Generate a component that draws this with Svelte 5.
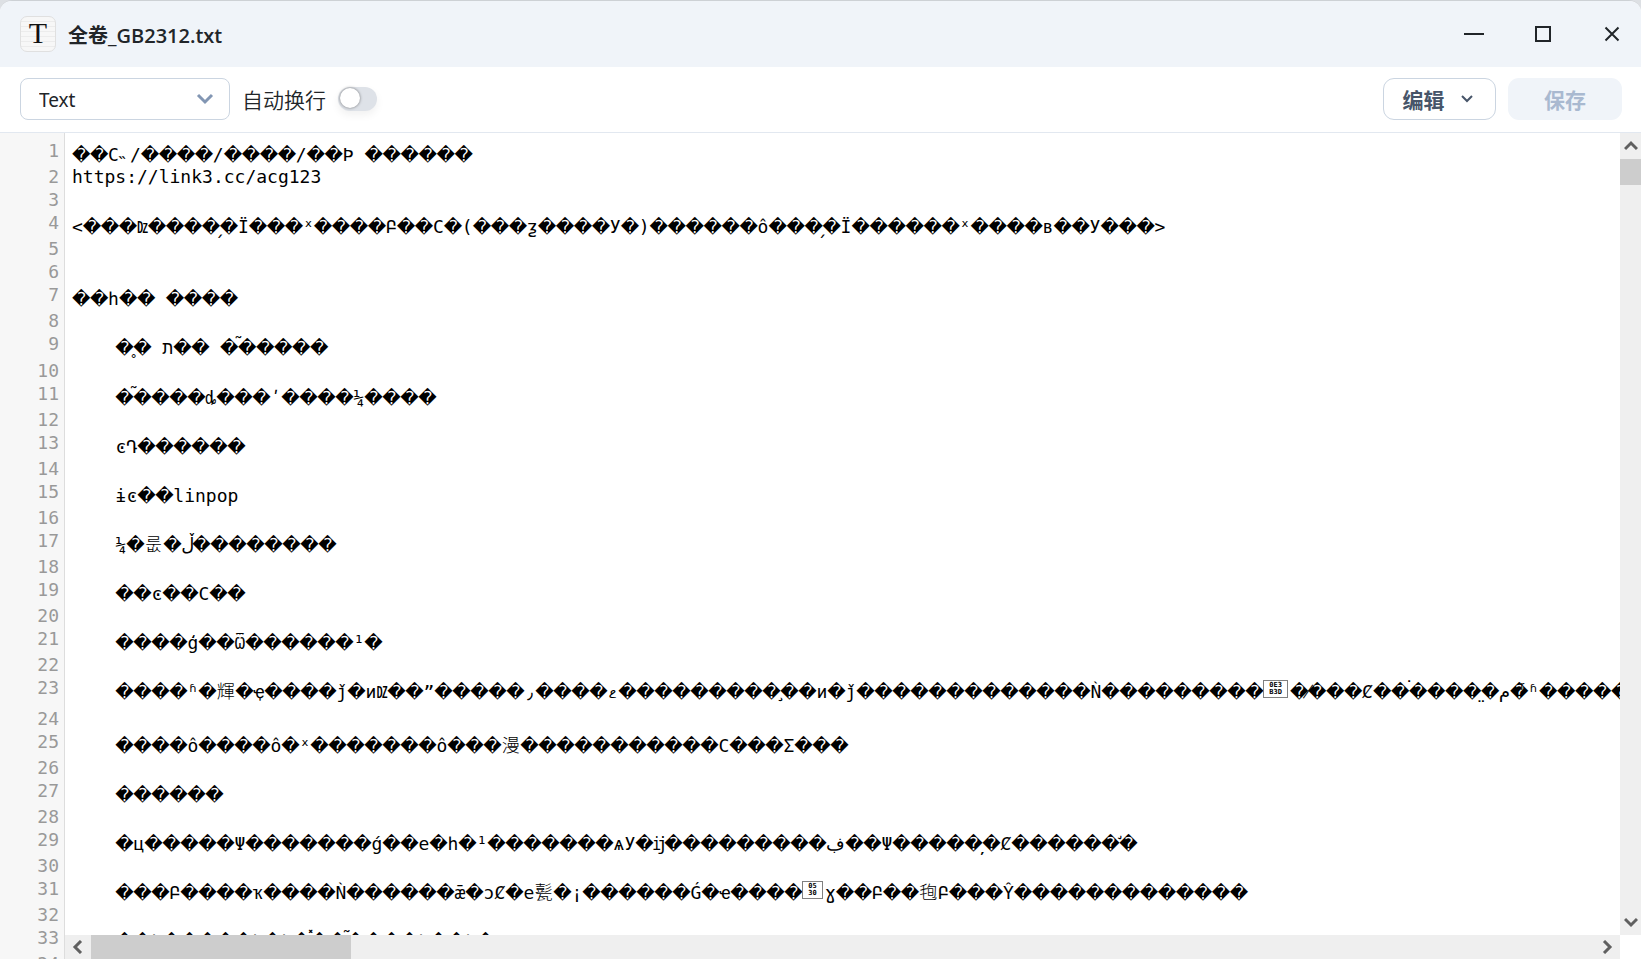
<script>
	let modes = ["Text", "Markdown", "JSON", "HTML"];
	let mode = "Text";
	let wrap = false;

	// "~3" is a run of three undecodable characters, "[0E3B3D]" a code box
	let source = [
		"~2С˵/~4/~4/~2Ϸ ~6",
		"https://link3.cc/acg123",
		"",
		"<~3ǲ~4̗~1Ϊ~3ˣ~4Բ~2С~1(~3ƺ~4У~1)~6ô~3̗~1Ϊ~6ˣ~4в~2У~3>",
		"",
		"",
		"~2һ~2 ~4",
		"",
		"    ~1̥~1 ת~2 ~1̃~5",
		"",
		"    ~1̃~4ȡ~3ʹ~4¼~4",
		"",
		"    ͼԴ~6",
		"",
		"    ɨͼ~2linpop",
		"",
		"    ¼~1룺~1ڵ~8",
		"",
		"    ~2ͼ~2С~2",
		"",
		"    ~4ģ~2Ѿ~6¹~1",
		"",
		"    ~4ʱ~1輝~1ҿ~4ǰ~1ͷǱ~2ˮ~5٫~4ޱ~9̧~2ͷ~1ǰ~13Ǹ~9[0E3B3D]~1̸~3Ȼ~2̇~4̤~1م~1ͬʱ~6",
		"",
		"    ~4ô~4ô~1ˣ~7ô~3漫~11С~3Σ~3",
		"",
		"    ~6",
		"",
		"    ~1ц~5Ψ~7ǵ~2е~1һ~1¹~7ѧУ~1ĳ~9ڣ~2Ψ~5̦~1Ȼ~6̛~1",
		"",
		"    ~3Բ~4ҡ~4Ǹ~6ǣ~1ͻȻ~1е甏~1¡~6Ǵ~1ҽ~4[0530]ɣ~2Բ~2毥Բ~3Ŷ~13",
		"",
		"    ~2һ~5һ~1һ~1̽~2̃~4һ~2һ~1",
		""
	];

	let marksAbove = "\u0303\u0307\u031b\u033d\u036c";

	let parse = function (text) {
		let parts = [];
		(text.match(/~\d+|\[\w+\]|[ -Z^-}]+|./gu) || []).forEach(item => {
			if (item[0] === "~") {
				for (let i = 0; i < +item.slice(1); i++) {
					parts.push({ type: "bad", text: "\ufffd" });
				}
			} else if (item[0] === "[") {
				let half = (item.length - 2) / 2;
				parts.push({ type: "box", text: item.slice(1, 1 + half), rest: item.slice(1 + half, -1) });
			} else if (/[\u0300-\u036f]/.test(item)) {
				parts.push({ type: marksAbove.includes(item) ? "mark above" : "mark", text: "\u00a0" + item });
			} else if (/[\u06a3\u3000-\ud7ff]/.test(item)) {
				parts.push({ type: "wide", text: item });
			} else if (item > "\u007f") {
				parts.push({ type: "cell", text: item });
			} else {
				parts.push({ type: "text", text: item });
			}
		});
		return parts;
	}

	let lines = source.map(text => ({
		parts: parse(text),
		tall: text.includes("~"),
		hebrew: text.includes("\u05ea"),
		extra: text.includes("[0E3B3D]")
	}));
</script>

<main>
	<header>
		<span class="logo">T</span>
		<h1>全卷_GB2312.txt</h1>
		<button class="win" aria-label="最小化">
			<svg width="20" height="20" viewBox="0 0 20 20"><path d="M0 10H20" /></svg>
		</button>
		<button class="win" aria-label="最大化">
			<svg width="20" height="20" viewBox="0 0 20 20"><path d="M3 3H17V17H3Z" /></svg>
		</button>
		<button class="win" aria-label="关闭">
			<svg width="20" height="20" viewBox="0 0 20 20"><path d="M3.5 3.5L16.5 16.5M16.5 3.5L3.5 16.5" /></svg>
		</button>
	</header>

	<div class="toolbar">
		<div class="select">
			<select bind:value={mode} aria-label="语言">
				{#each modes as item}
					<option>{item}</option>
				{/each}
			</select>
			<svg width="18" height="12" viewBox="0 0 18 12"><path d="M2 2L9 9L16 2" /></svg>
		</div>
		<label for="wrap">自动换行</label>
		<input id="wrap" type="checkbox" role="switch" bind:checked={wrap} />
		<button class="edit">
			编辑
			<svg width="12" height="8" viewBox="0 0 12 8"><path d="M1 1L6 6L11 1" /></svg>
		</button>
		<button class="save" disabled>保存</button>
	</div>

	<div class="editor">
		<div class="lines">
			{#each lines as line, i}
				<div class="line" class:tall={line.tall} class:hebrew={line.hebrew} class:extra={line.extra}>
					<span class="number">{i + 1}</span>
					<pre class:wrap>{#each line.parts as part}{#if part.type === "box"}<span class="box"><span>{part.text}</span><span>{part.rest}</span></span>{:else}<span class={part.type}>{part.text}</span>{/if}{/each}</pre>
				</div>
			{/each}
		</div>
		<div class="vbar">
			<button aria-label="向上滚动"><svg width="14" height="12" viewBox="0 0 14 12"><path d="M1 9L7 3L13 9" /></svg></button>
			<div class="thumb"></div>
			<button class="end" aria-label="向下滚动"><svg width="14" height="12" viewBox="0 0 14 12"><path d="M1 3L7 9L13 3" /></svg></button>
		</div>
		<div class="corner"></div>
		<div class="hbar">
			<button aria-label="向左滚动"><svg width="12" height="14" viewBox="0 0 12 14"><path d="M9 1L3 7L9 13" /></svg></button>
			<div class="thumb"></div>
			<button class="end" aria-label="向右滚动"><svg width="12" height="14" viewBox="0 0 12 14"><path d="M3 1L9 7L3 13" /></svg></button>
		</div>
	</div>
</main>

<style>
	:global(body) {
		background: #dde0e4;
	}

	main {
		display: flex;
		flex-direction: column;
		height: 100vh;
		box-sizing: border-box;
		border-top: 1px solid #cdd1d5;
		border-radius: 12px 12px 0 0;
		overflow: hidden;
		background: #fff;
		color: #212529;
		font-family: "Noto Sans", "Noto Sans CJK SC", sans-serif;
		font-size: 20px;
	}

	button {
		display: flex;
		align-items: center;
		justify-content: center;
		padding: 0;
		border: 0;
		background: none;
		color: inherit;
		font: inherit;
	}

	svg {
		display: block;
		fill: none;
		stroke: currentColor;
		stroke-width: 2;
	}

	header {
		display: flex;
		align-items: center;
		flex: none;
		height: 66px;
		padding: 0 12px 0 20px;
		box-sizing: border-box;
		background: #f0f4f9;
	}

	.logo {
		width: 34px;
		height: 34px;
		border: 1px solid #e0e0e0;
		border-radius: 7px;
		background: repeating-linear-gradient(#f7f7f7 0 4px, #ececec 4px 5px);
		color: #111;
		font: 30px/32px "Liberation Serif", serif;
		text-align: center;
	}

	h1 {
		flex: 1;
		margin: 0 0 0 12px;
		font-size: 20px;
		font-weight: 600;
		font-family: "Open Sans", "Noto Sans CJK SC", sans-serif;
	}

	.win {
		width: 34px;
		height: 34px;
		margin-left: 35px;
	}

	.toolbar {
		display: flex;
		align-items: center;
		flex: none;
		height: 66px;
		padding: 0 19px 2px 20px;
		box-sizing: border-box;
		border-bottom: 1px solid #e2e8f0;
	}

	.select {
		display: grid;
		align-items: center;
		width: 210px;
		height: 42px;
		margin-right: 12px;
	}

	.select > * {
		grid-area: 1 / 1;
	}

	.select svg {
		justify-self: end;
		margin-right: 16px;
		color: #8296b3;
		stroke-width: 3;
		pointer-events: none;
	}

	select {
		width: 100%;
		height: 100%;
		padding: 2px 18px 0;
		border: 1px solid #cbd5e1;
		border-radius: 8px;
		background: #fff;
		color: inherit;
		font: inherit;
		font-size: 19px;
		appearance: none;
	}

	label {
		font-size: 21px;
		font-weight: 350;
	}

	input {
		display: flex;
		width: 39px;
		height: 24px;
		margin: 0 0 0 12px;
		padding: 1px 2px;
		box-sizing: border-box;
		border-radius: 12px;
		background: #dee2e8;
		box-shadow: 0 4px 8px rgba(0, 0, 0, 0.06);
		appearance: none;
	}

	input::before {
		content: "";
		width: 20px;
		height: 20px;
		border-radius: 50%;
		background: #fff;
		box-shadow: 0 0 3px rgba(0, 0, 0, 0.5);
	}

	input:checked {
		justify-content: flex-end;
		background: #3b82f6;
	}

	.edit, .save {
		height: 42px;
		border-radius: 11px;
		font-size: 21px;
		font-weight: 700;
	}

	.edit {
		width: 113px;
		margin-left: auto;
		padding-right: 4px;
		gap: 16px;
		border: 1px solid #cbd5e1;
		color: #475569;
	}

	.save {
		width: 114px;
		margin-left: 12px;
		background: #f0f4f9;
		color: #a9b9d0;
	}

	.editor {
		display: grid;
		grid-template-columns: 65px minmax(0, 1fr) 21px;
		grid-template-rows: minmax(0, 1fr) 24px;
		flex: 1;
		min-height: 0;
	}

	.lines {
		grid-area: 1 / 1 / 3 / 3;
		padding-top: 6px;
		overflow: hidden;
		background: linear-gradient(to right, #f7f7f7 64px, #ddd 64px 65px, #fff 65px);
		color: #000;
		font: 18px/23px "DejaVu Sans Mono", "Liberation Mono", "DejaVu Sans", "Noto Sans CJK SC", monospace;
	}

	.line {
		display: flex;
		height: 23px;
	}

	.tall {
		height: 26px;
	}

	.hebrew {
		height: 27px;
	}

	.extra {
		height: 31px;
	}

	.number {
		flex: none;
		width: 59px;
		color: #999;
		text-align: right;
	}

	pre {
		margin: 0 0 0 13px;
		font: inherit;
		white-space: pre;
	}

	pre.wrap {
		white-space: pre-wrap;
	}

	.tall pre {
		padding-top: 4px;
	}

	.bad, .mark, .cell, .wide {
		display: inline-block;
		height: 23px;
		vertical-align: top;
	}

	.bad {
		width: 18px;
		font-family: "DejaVu Sans", sans-serif;
		line-height: 24px;
		text-align: center;
	}

	.cell {
		width: 11px;
		text-align: center;
	}

	.wide {
		width: 19px;
		font-weight: 300;
		text-align: center;
	}

	.mark {
		width: 0;
		margin-left: -16px;
		margin-right: 16px;
	}

	.above {
		line-height: 15px;
	}

	.box {
		display: inline-flex;
		flex-direction: column;
		align-items: center;
		justify-content: center;
		height: 18px;
		padding: 0 5px;
		box-sizing: border-box;
		border: 1px solid #808080;
		margin-right: 2px;
		font-size: 7px;
		font-weight: 700;
		line-height: 7px;
		vertical-align: top;
	}

	.vbar, .hbar {
		display: flex;
		background: #efefef;
		color: #606060;
	}

	.vbar svg, .hbar svg {
		stroke-width: 3;
	}

	.vbar {
		grid-area: 1 / 3;
		flex-direction: column;
	}

	.vbar button, .vbar .thumb {
		height: 26px;
	}

	.hbar {
		grid-area: 2 / 2;
		z-index: 1;
	}

	.hbar button {
		width: 26px;
	}

	.hbar .thumb {
		width: 260px;
	}

	.thumb {
		background: #cdcdcd;
	}

	.vbar .end {
		margin-top: auto;
	}

	.hbar .end {
		margin-left: auto;
	}

	.corner {
		grid-area: 2 / 3;
		background: #fff;
	}
</style>
